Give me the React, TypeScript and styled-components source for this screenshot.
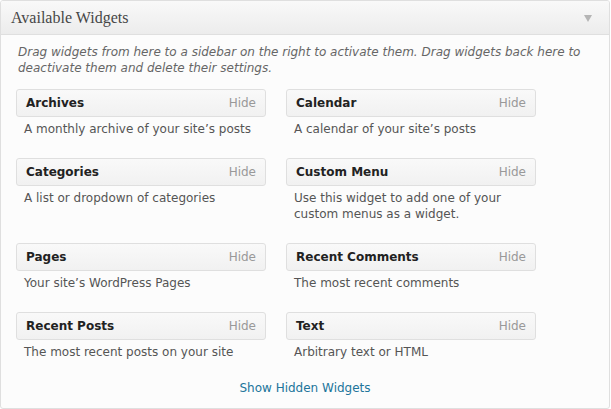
import React from 'react';
import styled, { createGlobalStyle } from 'styled-components';

const GlobalStyle = createGlobalStyle`
	html, body {
		margin: 0;
		padding: 0;
		background: #ffffff;
	}
	body {
		font-family: 'DejaVu Sans', sans-serif;
	}
`;

const Postbox = styled.div`
	width: 608px;
	height: 407px;
	border: 1px solid #dfdfdf;
	border-radius: 3px;
	background-color: #fcfcfc;
	display: flex;
	flex-direction: column;
	overflow: hidden;
`;

const BoxHeader = styled.div`
	height: 33px;
	display: flex;
	align-items: center;
	padding: 0 17px 0 10px;
	border-bottom: 1px solid #dfdfdf;
	background: linear-gradient(to bottom, #f9f9f9, #ececec);
`;

const BoxTitle = styled.div`
	flex: 1;
	font-family: 'Liberation Serif', 'Times New Roman', serif;
	font-size: 16px;
	color: #464646;
`;

const ToggleArrow = styled.div`
	width: 0;
	height: 0;
	border-left: 4px solid transparent;
	border-right: 4px solid transparent;
	border-top: 7px solid #b5b5b5;
	margin-top: 1px;
`;

const Inside = styled.div`
	padding: 9px 15px 0 15px;
	display: flex;
	flex-direction: column;
`;

const Intro = styled.p`
	margin: 0 0 13px 2px;
	font-size: 12px;
	line-height: 16px;
	font-style: italic;
	color: #666;
`;

const WidgetGrid = styled.div`
	display: grid;
	grid-template-columns: 250px 250px;
	column-gap: 20px;
	row-gap: 21px;
`;

const Widget = styled.div`
	display: flex;
	flex-direction: column;
`;

const WidgetTop = styled.div`
	height: 26px;
	display: flex;
	align-items: center;
	padding: 0 9px 0 9px;
	border: 1px solid #dfdfdf;
	border-radius: 3px;
	background: linear-gradient(to bottom, #f9f9f9, #f1f1f1);
`;

const WidgetName = styled.div`
	flex: 1;
	font-size: 12px;
	font-weight: bold;
	color: #222;
`;

const HideLink = styled.span`
	font-size: 12px;
	color: #999;
`;

const WidgetDesc = styled.div`
	padding: 4px 8px 0 8px;
	font-size: 12px;
	line-height: 16px;
	color: #555;
`;

const ShowHidden = styled.a`
	display: block;
	margin-top: 20px;
	text-align: center;
	font-size: 12px;
	line-height: 16px;
	color: #21759b;
	text-decoration: none;
	cursor: pointer;
`;

const widgets = [
	{ name: 'Archives', desc: 'A monthly archive of your site\u2019s posts' },
	{ name: 'Calendar', desc: 'A calendar of your site\u2019s posts' },
	{ name: 'Categories', desc: 'A list or dropdown of categories' },
	{ name: 'Custom Menu', desc: 'Use this widget to add one of your custom menus as a widget.' },
	{ name: 'Pages', desc: 'Your site\u2019s WordPress Pages' },
	{ name: 'Recent Comments', desc: 'The most recent comments' },
	{ name: 'Recent Posts', desc: 'The most recent posts on your site' },
	{ name: 'Text', desc: 'Arbitrary text or HTML' },
];

export default function App() {
	return (
		<>
			<GlobalStyle />
			<Postbox>
				<BoxHeader>
					<BoxTitle>Available Widgets</BoxTitle>
					<ToggleArrow />
				</BoxHeader>
				<Inside>
					<Intro>
						Drag widgets from here to a sidebar on the right to activate them. Drag widgets back here to deactivate them and delete their settings.
					</Intro>
					<WidgetGrid>
						{widgets.map((w) => (
							<Widget key={w.name}>
								<WidgetTop>
									<WidgetName>{w.name}</WidgetName>
									<HideLink>Hide</HideLink>
								</WidgetTop>
								<WidgetDesc>{w.desc}</WidgetDesc>
							</Widget>
						))}
					</WidgetGrid>
					<ShowHidden>Show Hidden Widgets</ShowHidden>
				</Inside>
			</Postbox>
		</>
	);
}
